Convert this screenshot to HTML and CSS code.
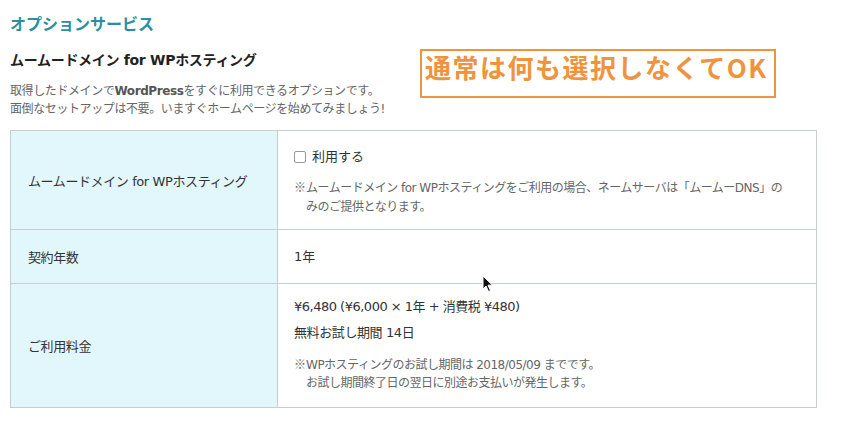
FILE: index.html
```html
<!DOCTYPE html>
<html lang="ja">
<head>
    <meta charset="UTF-8">
    <title>オプションサービス</title>
    <link rel="stylesheet" href="styles.css">
</head>
<body>
    <h2 class="section-title">オプションサービス</h2>

    <div class="option-head">
        <div class="option-intro">
            <h3>ムームードメイン for WPホスティング</h3>
            <p>取得したドメインで<b>WordPress</b>をすぐに利用できるオプションです。<br>面倒なセットアップは不要。いますぐホームページを始めてみましょう!</p>
        </div>
        <div class="callout">通常は何も選択しなくてOK</div>
    </div>

    <table class="option-table">
        <tr class="row-wp">
            <th>ムームードメイン for WPホスティング</th>
            <td>
                <label class="check"><span class="box"></span>利用する</label>
                <p class="note"><span class="mark">※</span>ムームードメイン for WPホスティングをご利用の場合、ネームサーバは「ムームーDNS」の<br>みのご提供となります。</p>
            </td>
        </tr>
        <tr class="row-year">
            <th>契約年数</th>
            <td>1年</td>
        </tr>
        <tr class="row-price">
            <th>ご利用料金</th>
            <td>
                <div class="price">¥6,480 (¥6,000 × 1年 + 消費税 ¥480)</div>
                <div class="trial">無料お試し期間 14日</div>
                <p class="note"><span class="mark">※</span>WPホスティングのお試し期間は 2018/05/09 までです。<br>お試し期間終了日の翌日に別途お支払いが発生します。</p>
            </td>
        </tr>
    </table>

    <!-- マウスカーソル -->
    <svg class="cursor" width="12" height="18" viewBox="0 0 12 18">
        <path d="M1 1 L1 14 L4 11 L6.5 16.5 L8.5 15.6 L6 10.2 L10.5 10.2 Z" fill="#111" stroke="#fff" stroke-width="1"/>
    </svg>
</body>
</html>
```

FILE: styles.css
```css
/* ページ全体 */
html, body {
    margin: 0;
    background: #fff;
}

body {
    padding: 0 10px;
    font-family: "Noto Sans CJK JP", sans-serif;
    color: #333;
    position: relative;
}

.section-title {
    margin: 0;
    padding-top: 12px;
    font-size: 16px;
    line-height: 22px;
    font-weight: bold;
    color: #2b8ea1;
}

/* 見出しと注意書き */
.option-head {
    display: flex;
    align-items: flex-start;
    margin-top: 16px;
}

.option-intro {
    width: 410px;
}

.option-intro h3 {
    margin: 0;
    font-family: "DejaVu Sans", "Noto Sans CJK JP", sans-serif;
    font-size: 14px;
    line-height: 20px;
    font-weight: bold;
    color: #222;
    letter-spacing: -0.3px;
}

.option-intro p {
    margin: 12px 0 0;
    font-family: "DejaVu Sans", "Noto Sans CJK JP", sans-serif;
    font-size: 12px;
    line-height: 18px;
    color: #666;
    letter-spacing: -0.4px;
}

.option-intro p b {
    font-weight: bold;
    color: #555;
}

.callout {
    width: 349px;
    height: 45px;
    margin-top: -1px;
    padding-left: 3px;
    border: 2px solid #ef933d;
    color: #ef933d;
    font-size: 26px;
    line-height: 32px;
    font-weight: bold;
    letter-spacing: 1.5px;
    white-space: nowrap;
}

/* テーブル */
.option-table {
    width: 807px;
    margin-top: 12px;
    border-collapse: collapse;
    font-family: "DejaVu Sans", "Noto Sans CJK JP", sans-serif;
    font-size: 13px;
}

.option-table th,
.option-table td {
    border: 1px solid #c8cdd0;
    text-align: left;
    vertical-align: middle;
    font-weight: normal;
}

.option-table th {
    width: 249px;
    padding: 0 0 0 17px;
    background-color: #e1f7fc;
    color: #333;
    letter-spacing: -0.4px;
}

.option-table td {
    padding: 0 16px;
    line-height: 20px;
}

.row-wp td {
    padding-top: 16px;
    padding-bottom: 12px;
}

.row-year td {
    height: 53px;
    padding-top: 0;
    padding-bottom: 0;
}

.row-price td {
    padding-top: 13px;
    padding-bottom: 15px;
}

.check {
    display: flex;
    align-items: center;
}

.box {
    width: 10px;
    height: 10px;
    margin-right: 6px;
    border: 1px solid #999;
    border-radius: 2px;
    background: #fff;
}

.note {
    margin: 10px 0 0;
    padding-left: 12px;
    text-indent: -12px;
    font-size: 12px;
    line-height: 19px;
    color: #666;
    letter-spacing: -0.5px;
}

.mark {
    font-family: "Noto Sans CJK JP", sans-serif;
    letter-spacing: 0;
}

.price {
    letter-spacing: -0.5px;
}

.trial {
    margin-top: 6px;
    letter-spacing: -0.4px;
}

.row-price .note {
    margin-top: 12px;
    line-height: 18px;
}

.cursor {
    position: absolute;
    left: 482px;
    top: 275px;
}
```
